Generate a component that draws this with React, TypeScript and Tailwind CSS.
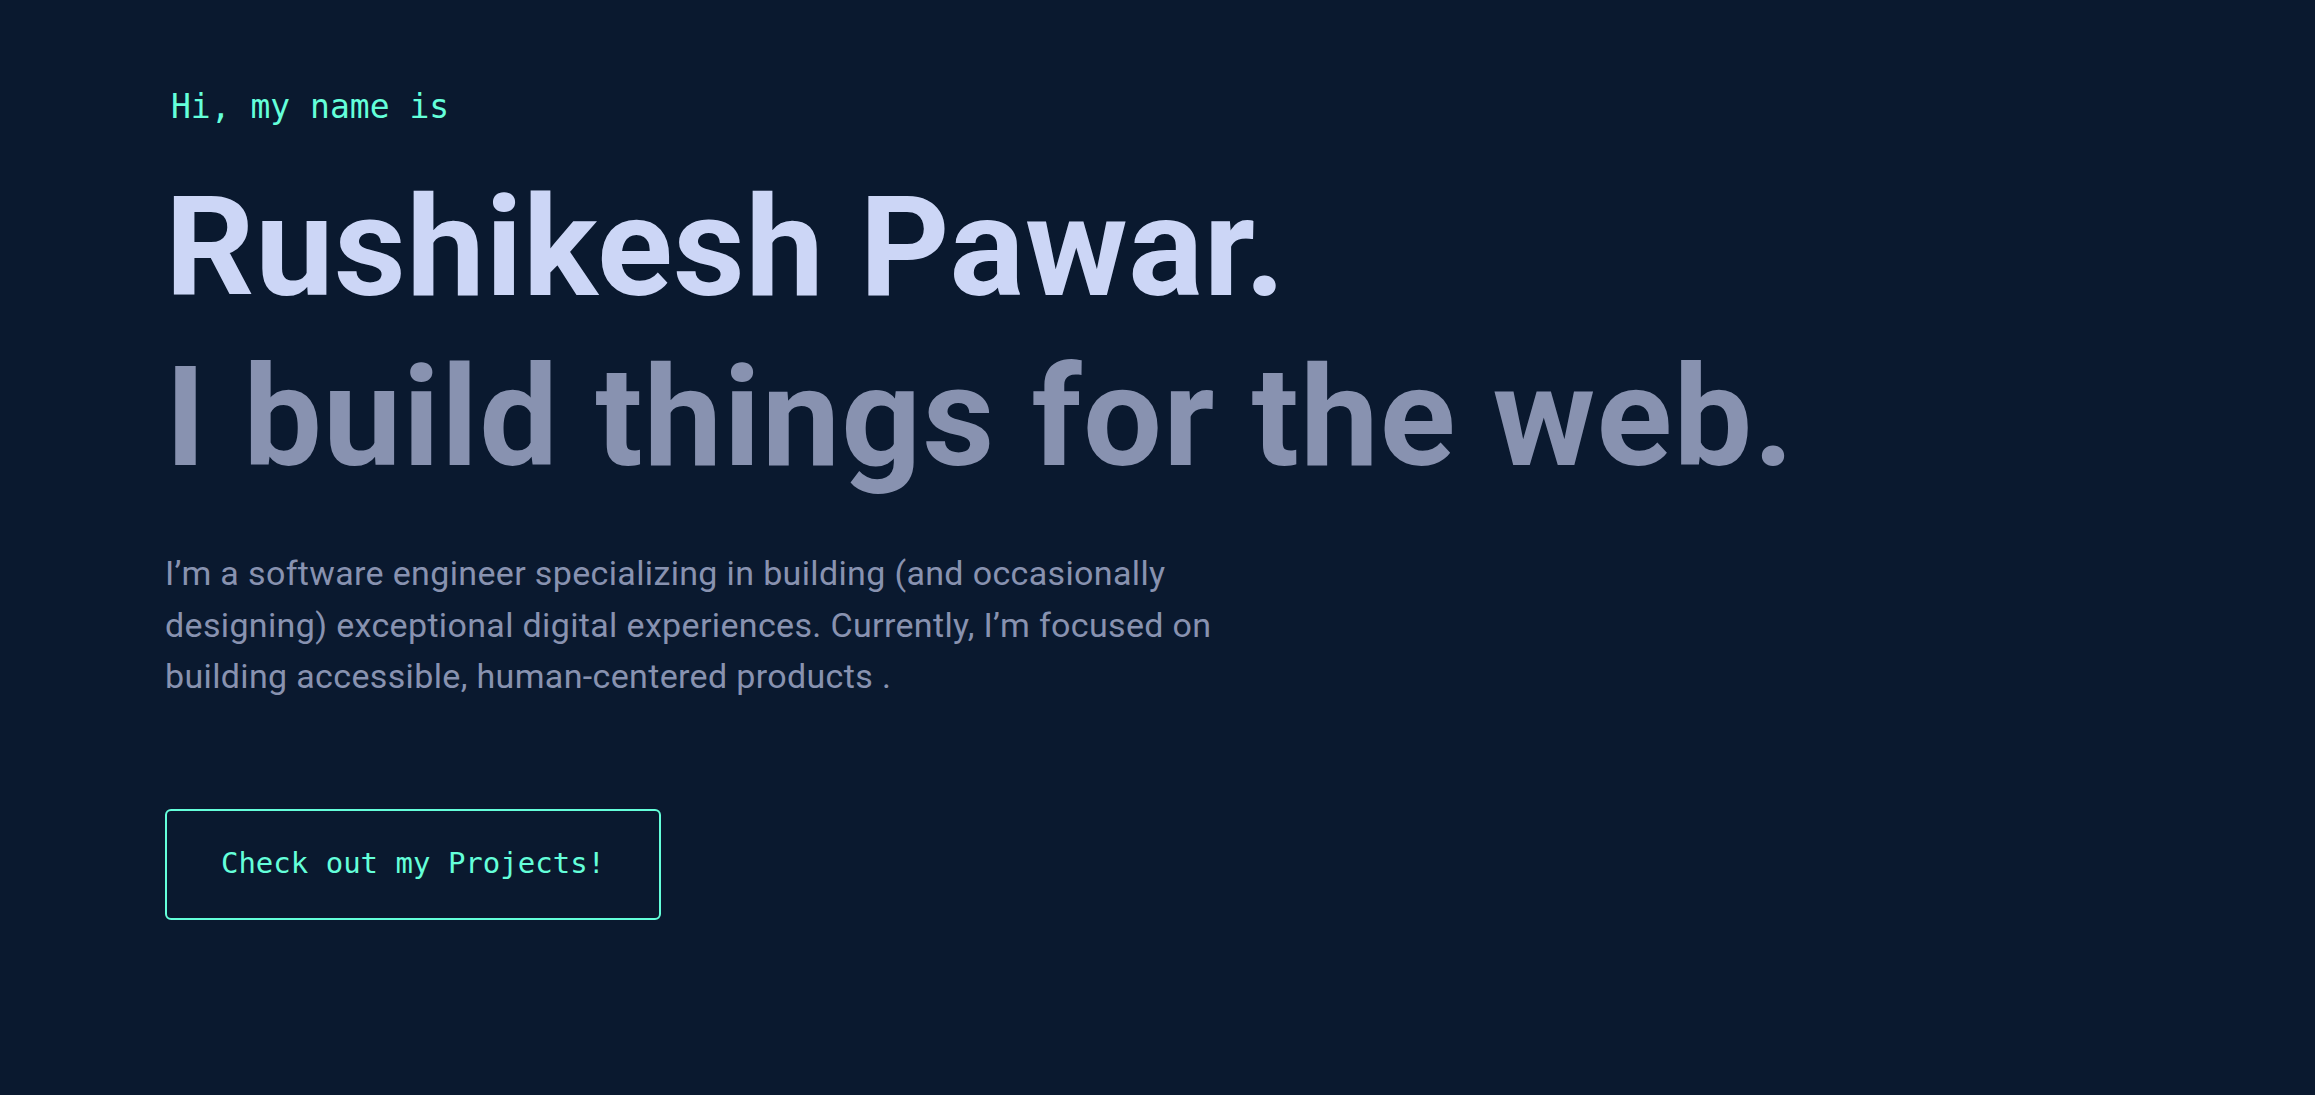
export default function App() {
    return (
        <main className="min-h-screen bg-[#0a192f] pl-[165px] pt-[87px] font-['Roboto',sans-serif]">
            <section className="flex flex-col items-start">
                {/* Intro line, mono + accent green */}
                <h1 className="ml-[6px] font-['DejaVu_Sans_Mono',monospace] text-[33px] leading-[40px] text-[#64ffda]">
                    Hi, my name is
                </h1>

                <h2 className="mt-[35px] text-[140px] font-bold leading-[170px] tracking-[0.5px] text-[#ccd6f6]">
                    Rushikesh Pawar.
                </h2>
                <h3 className="text-[140px] font-bold leading-[170px] tracking-[1.2px] text-[#8892b0]">
                    I build things for the web.
                </h3>

                <p className="mt-[46px] max-w-[1090px] text-[34px] leading-[51.5px] tracking-[0.35px] text-[#8892b0]">
                    I’m a software engineer specializing in building (and occasionally
                    designing) exceptional digital experiences. Currently, I’m focused on
                    building accessible, human-centered products .
                </p>

                <a
                    href="#projects"
                    className="mt-[106px] flex h-[111px] w-[496px] items-center justify-center rounded-[6px] border-2 border-[#64ffda] font-['DejaVu_Sans_Mono',monospace] text-[29px] text-[#64ffda]"
                >
                    Check out my Projects!
                </a>
            </section>
        </main>
    )
}
